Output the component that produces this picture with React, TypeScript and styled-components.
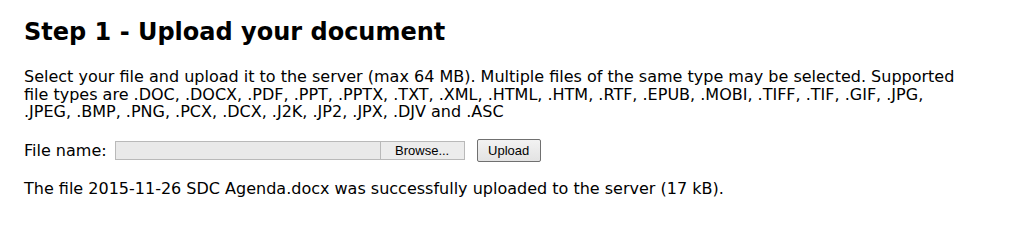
import React from "react";
import styled, { createGlobalStyle } from "styled-components";

const Global = createGlobalStyle`
  html, body { margin: 0; padding: 0; background: #ffffff; }
  body { font-family: "DejaVu Sans", Verdana, sans-serif; color: #000; }
`;

const Page = styled.div`
  padding: 14px 24px 0 24px;
  display: flex;
  flex-direction: column;
`;

const Title = styled.h1`
  margin: 0;
  font-size: 24px;
  font-weight: bold;
  line-height: 36px;
`;

const Para = styled.p`
  margin: 18px 0 0 0;
  font-size: 16px;
  line-height: 17.6px;
`;

const FormRow = styled.div`
  display: flex;
  align-items: center;
  margin-top: 18px;
  font-size: 16px;
  height: 23px;
`;

const Label = styled.span`
  margin-right: 8px;
`;

const FileBox = styled.div`
  display: flex;
  height: 19px;
  width: 350px;
  border: 1px solid #b9b9b9;
  background: #e9e9e9;
  box-sizing: border-box;
`;

const FileText = styled.div`
  flex: 1;
`;

const Browse = styled.div`
  width: 83px;
  border-left: 1px solid #b9b9b9;
  background: #ececec;
  font-family: "Liberation Sans", Arial, sans-serif;
  font-size: 13px;
  display: flex;
  align-items: center;
  justify-content: center;
  line-height: 1;
`;

const Button = styled.button`
  margin-left: 12px;
  width: 64px;
  height: 23px;
  border: 1px solid #707070;
  border-radius: 2px;
  background: linear-gradient(#f2f2f2, #e3e3e3);
  font-family: "Liberation Sans", Arial, sans-serif;
  font-size: 13px;
  color: #000;
  padding: 0;
`;

const Status = styled.p`
  margin: 18px 0 0 0;
  font-size: 16px;
  line-height: 17.6px;
`;

export default function App() {
  return (
    <>
      <Global />
      <Page>
        <Title>Step 1 - Upload your document</Title>
        <Para>
          Select your file and upload it to the server (max 64 MB). Multiple files of the same type may be selected. Supported
          <br />
          file types are .DOC, .DOCX, .PDF, .PPT, .PPTX, .TXT, .XML, .HTML, .HTM, .RTF, .EPUB, .MOBI, .TIFF, .TIF, .GIF, .JPG,
          <br />
          .JPEG, .BMP, .PNG, .PCX, .DCX, .J2K, .JP2, .JPX, .DJV and .ASC
        </Para>
        <FormRow>
          <Label>File name:</Label>
          <FileBox>
            <FileText />
            <Browse>Browse...</Browse>
          </FileBox>
          <Button>Upload</Button>
        </FormRow>
        <Status>The file 2015-11-26 SDC Agenda.docx was successfully uploaded to the server (17 kB).</Status>
      </Page>
    </>
  );
}
